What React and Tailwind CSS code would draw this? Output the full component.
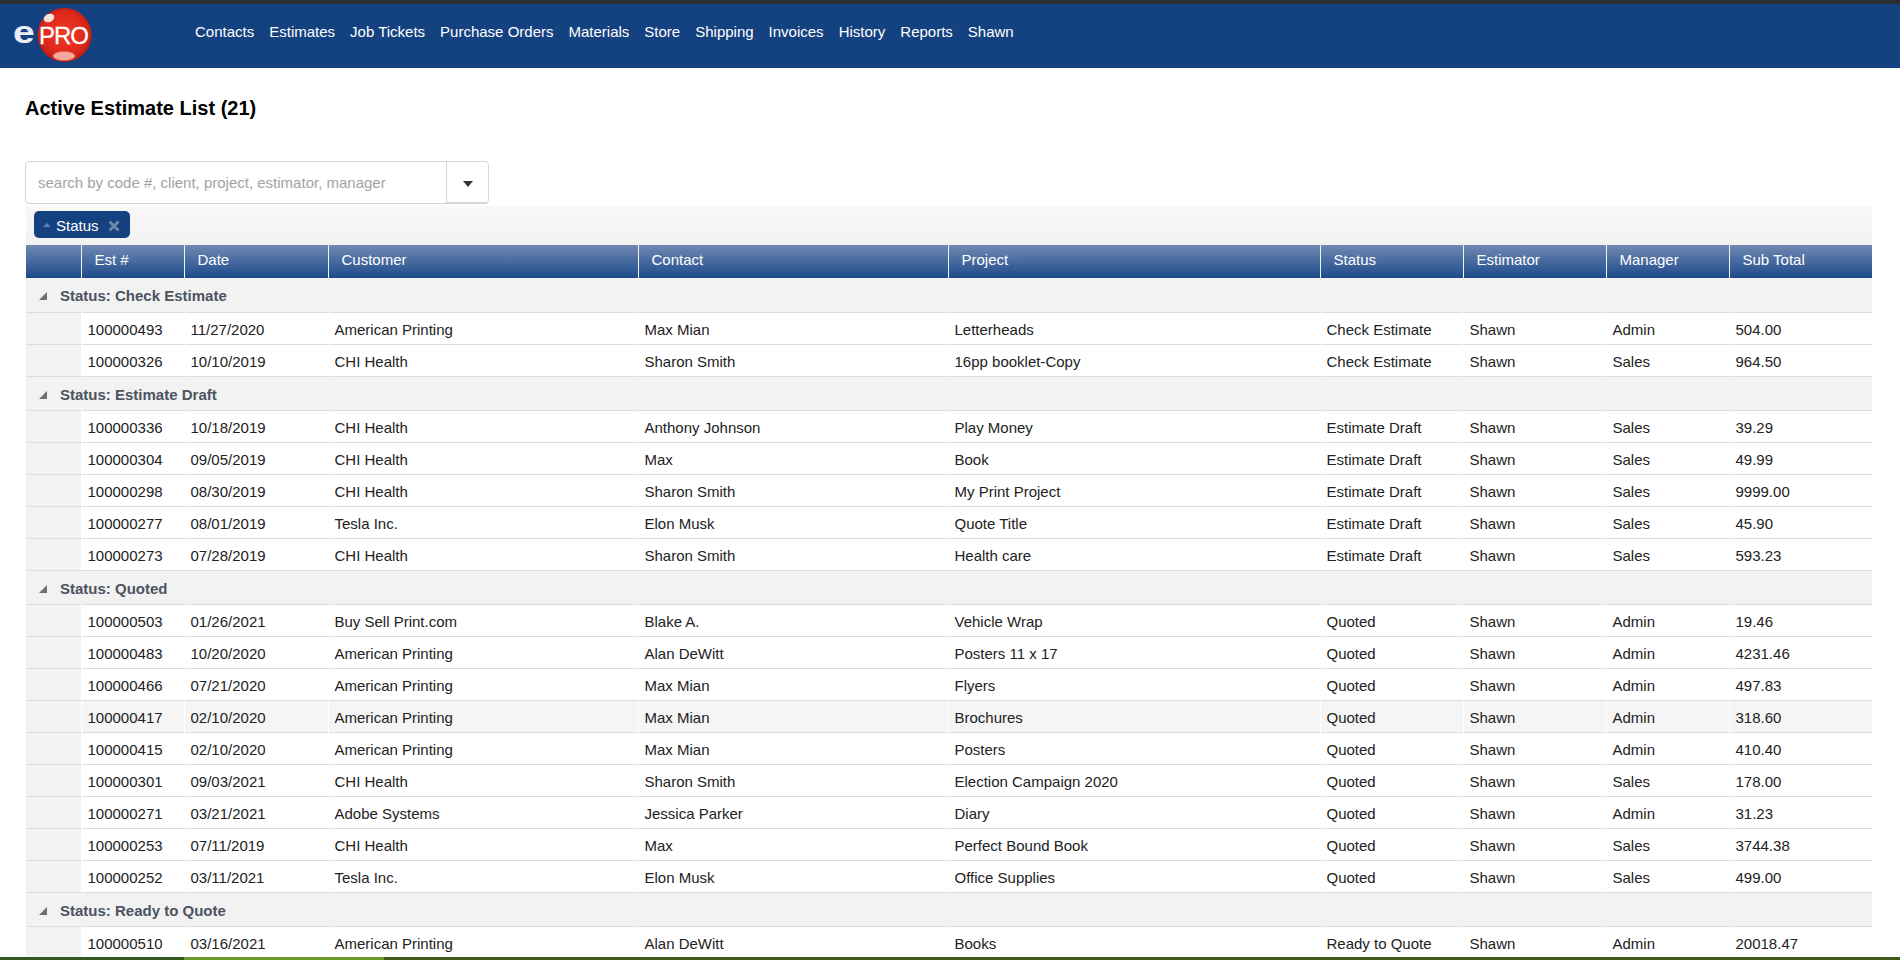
const NAV = ['Contacts', 'Estimates', 'Job Tickets', 'Purchase Orders', 'Materials', 'Store', 'Shipping', 'Invoices', 'History', 'Reports', 'Shawn'];

const COLUMNS = ['Est #', 'Date', 'Customer', 'Contact', 'Project', 'Status', 'Estimator', 'Manager', 'Sub Total'];

const GROUPS = [
  {
    name: 'Check Estimate',
    rows: [
      ['100000493', '11/27/2020', 'American Printing', 'Max Mian', 'Letterheads', 'Shawn', 'Admin', '504.00'],
      ['100000326', '10/10/2019', 'CHI Health', 'Sharon Smith', '16pp booklet-Copy', 'Shawn', 'Sales', '964.50'],
    ],
  },
  {
    name: 'Estimate Draft',
    rows: [
      ['100000336', '10/18/2019', 'CHI Health', 'Anthony Johnson', 'Play Money', 'Shawn', 'Sales', '39.29'],
      ['100000304', '09/05/2019', 'CHI Health', 'Max', 'Book', 'Shawn', 'Sales', '49.99'],
      ['100000298', '08/30/2019', 'CHI Health', 'Sharon Smith', 'My Print Project', 'Shawn', 'Sales', '9999.00'],
      ['100000277', '08/01/2019', 'Tesla Inc.', 'Elon Musk', 'Quote Title', 'Shawn', 'Sales', '45.90'],
      ['100000273', '07/28/2019', 'CHI Health', 'Sharon Smith', 'Health care', 'Shawn', 'Sales', '593.23'],
    ],
  },
  {
    name: 'Quoted',
    rows: [
      ['100000503', '01/26/2021', 'Buy Sell Print.com', 'Blake A.', 'Vehicle Wrap', 'Shawn', 'Admin', '19.46'],
      ['100000483', '10/20/2020', 'American Printing', 'Alan DeWitt', 'Posters 11 x 17', 'Shawn', 'Admin', '4231.46'],
      ['100000466', '07/21/2020', 'American Printing', 'Max Mian', 'Flyers', 'Shawn', 'Admin', '497.83'],
      ['100000417', '02/10/2020', 'American Printing', 'Max Mian', 'Brochures', 'Shawn', 'Admin', '318.60'],
      ['100000415', '02/10/2020', 'American Printing', 'Max Mian', 'Posters', 'Shawn', 'Admin', '410.40'],
      ['100000301', '09/03/2021', 'CHI Health', 'Sharon Smith', 'Election Campaign 2020', 'Shawn', 'Sales', '178.00'],
      ['100000271', '03/21/2021', 'Adobe Systems', 'Jessica Parker', 'Diary', 'Shawn', 'Admin', '31.23'],
      ['100000253', '07/11/2019', 'CHI Health', 'Max', 'Perfect Bound Book', 'Shawn', 'Sales', '3744.38'],
      ['100000252', '03/11/2021', 'Tesla Inc.', 'Elon Musk', 'Office Supplies', 'Shawn', 'Sales', '499.00'],
    ],
  },
  {
    name: 'Ready to Quote',
    rows: [
      ['100000510', '03/16/2021', 'American Printing', 'Alan DeWitt', 'Books', 'Shawn', 'Admin', '20018.47'],
    ],
  },
];

function Logo() {
  return (
    <svg width="100" height="64" viewBox="0 0 100 64" className="block">
      <defs>
        <radialGradient id="ball" cx="50%" cy="48%" r="55%">
          <stop offset="0%" stopColor="#f03a26" />
          <stop offset="70%" stopColor="#e0281a" />
          <stop offset="100%" stopColor="#b21c12" />
        </radialGradient>
      </defs>
      <circle cx="64.5" cy="31" r="27" fill="url(#ball)" />
      <ellipse cx="49" cy="14" rx="5.5" ry="4" fill="#fbe3dc" transform="rotate(-25 49 14)" />
      <ellipse cx="64" cy="52" rx="11" ry="4.5" fill="#f6a99b" />
      <text x="39" y="40" textLength="50" fontFamily="Liberation Sans, sans-serif" fontSize="24" fill="#fff" stroke="#fff" strokeWidth="0.3">PRO</text>
      <text transform="translate(13 39) scale(1.22 1)" fontFamily="Liberation Sans, sans-serif" fontSize="32" fontWeight="700" fill="#e8eef7">e</text>
    </svg>
  );
}

function GroupRow({ name }) {
  return (
    <tr className="h-[34px] bg-[#f2f2f2] border-b border-[#dcdcdc]">
      <td colSpan={10} className="p-0">
        <div className="flex items-center font-bold text-[#4c5361] text-[15px] pt-[3px]">
          <svg width="10" height="10" viewBox="0 0 10 10" className="ml-[12px] mr-[12px]">
            <path d="M9 1v8H1z" fill="#6b6f76" />
          </svg>
          Status: {name}
        </div>
      </td>
    </tr>
  );
}

function DataRow({ row, status }) {
  const [est, date, customer, contact, project, estimator, manager, total] = row;
  const cells = [est, date, customer, contact, project, status, estimator, manager, total];
  const hovered = est === '100000417';
  return (
    <tr className={`h-[32px] border-b border-[#dcdcdc] ${hovered ? 'bg-[#f5f5f5]' : 'bg-white'}`}>
      <td className="p-0 bg-[#f2f2f2]"></td>
      {cells.map((cell, i) => (
        <td key={i} className={`p-0 pl-[6px] pt-[3px] whitespace-nowrap ${hovered ? 'border-l border-white' : 'border-l border-transparent'}`}>
          {cell}
        </td>
      ))}
    </tr>
  );
}

export default function App() {
  return (
    <div className="flex flex-col h-screen overflow-hidden bg-white font-['Liberation_Sans',Arial,sans-serif] text-[#222]">
      <header className="h-[68px] shrink-0 bg-[#14417f] border-t-4 border-[#2a2d31] flex">
        <div className="w-[195px] shrink-0">
          <Logo />
        </div>
        <nav className="flex gap-[15px] pt-[18px] text-[15px] leading-[20px] text-white">
          {NAV.map((item) => (
            <a key={item}>{item}</a>
          ))}
        </nav>
      </header>

      <main className="flex-1 min-h-0 overflow-hidden pl-[25px] pr-[28px]">
        <h1 className="mt-[27px] text-[20px] leading-[26px] font-bold text-black">Active Estimate List (21)</h1>

        <div className="mt-[40px] w-[464px] h-[43px] flex border border-[#d5d5d5] rounded-[4px] bg-white">
          <div className="flex-1 pl-[12px] pt-[2px] flex items-center text-[15px] text-[#a3a3a3]">
            search by code #, client, project, estimator, manager
          </div>
          <div className="w-[42px] h-[41px] border-l border-b border-[#d5d5d5] flex items-center justify-center pt-[3px]">
            <svg width="10" height="6" viewBox="0 0 10 6">
              <path d="M0 0h10L5 6z" fill="#333" />
            </svg>
          </div>
        </div>

        <div className="mt-[2px] ml-[1px]">
          <div className="h-[39px] bg-gradient-to-b from-[#f8f8f8] to-[#f2f2f2] pl-[8px] pt-[5px]">
            <div className="flex items-center h-[27px] w-[96px] rounded-[5px] bg-[#14417f] text-white text-[15px]">
              <svg width="8" height="6" viewBox="0 0 8 6" className="ml-[9px] mr-[5px]">
                <path d="M0 5h8L4 1z" fill="#5f7fb0" />
              </svg>
              <span className="pt-[4px]">Status</span>
              <svg width="12" height="12" viewBox="0 0 12 12" className="ml-[9px] mt-[2px]">
                <path d="M1.5 1.5l9 9M10.5 1.5l-9 9" stroke="#6f86ab" strokeWidth="3" />
              </svg>
            </div>
          </div>

          <table className="w-[1846px] table-fixed border-collapse text-[15px] leading-[20px]">
            <colgroup>
              <col className="w-[55px]" />
              <col className="w-[103px]" />
              <col className="w-[144px]" />
              <col className="w-[310px]" />
              <col className="w-[310px]" />
              <col className="w-[372px]" />
              <col className="w-[143px]" />
              <col className="w-[143px]" />
              <col className="w-[123px]" />
              <col className="w-[143px]" />
            </colgroup>
            <thead>
              <tr className="h-[33px] bg-gradient-to-b from-[#7089b3] to-[#1d4a8a] text-white">
                <th className="p-0"></th>
                {COLUMNS.map((col) => (
                  <th key={col} className="p-0 pl-[13px] pb-[3px] text-left font-normal border-l border-[#f0f2f6]">
                    {col}
                  </th>
                ))}
              </tr>
            </thead>
            <tbody>
              {GROUPS.map((group) => [
                <GroupRow key={group.name} name={group.name} />,
                ...group.rows.map((row) => <DataRow key={row[0]} row={row} status={group.name} />),
              ])}
            </tbody>
          </table>
        </div>
      </main>

      <div className="h-[3px] shrink-0 flex">
        <div className="w-[184px] bg-[#37561c]"></div>
        <div className="w-[200px] bg-[#6a9a2e]"></div>
        <div className="flex-1 bg-[#3d5a1e]"></div>
      </div>
    </div>
  );
}
